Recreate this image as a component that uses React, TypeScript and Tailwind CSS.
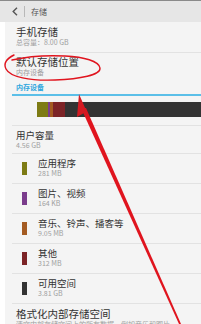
import React from 'react'

const items = [
  { name: '应用程序', size: '281 MB', color: 'bg-[#7d7b14]' },
  { name: '图片、视频', size: '164 KB', color: 'bg-[#7a3c8c]' },
  { name: '音乐、铃声、播客等', size: '9.05 MB', color: 'bg-[#a45b22]' },
  { name: '其他', size: '312 MB', color: 'bg-[#7c2427]' },
  { name: '可用空间', size: '3.81 GB', color: 'bg-[#333333]' },
]

function Divider() {
  return <div className="ml-[7px] h-px bg-[#e2e2e2]" />
}

export default function App() {
  return (
    <div
      className="relative h-[324px] w-[201px] overflow-hidden bg-[#f4f4f4] text-[#333]"
      style={{ fontFamily: '"Noto Sans CJK SC", "Noto Sans", sans-serif' }}
    >
      <div className="flex h-[22px] items-center border-t border-[#8a8a8a] bg-[#e6e6e6]">
        <svg width="6" height="9" viewBox="0 0 6 9" className="ml-[12px]">
          <path d="M5 0.8 L1.2 4.5 L5 8.2" fill="none" stroke="#555" strokeWidth="1.4" />
        </svg>
        <div className="ml-[6px] h-[11px] w-px bg-[#b8b8b8]" />
        <span className="ml-[6px] text-[8px] leading-none text-[#555]">存储</span>
      </div>

      <div className="border-l-[5px] border-white">
        <div className="h-[30px] pl-[11px] pt-[3px]">
          <div className="text-[10.5px] leading-[13px]">手机存储</div>
          <div className="text-[7px] leading-[9px] text-[#a0a0a0]">总容量：8.00 GB</div>
        </div>
        <Divider />
        <div className="h-[29px] pl-[11px] pt-[2px]">
          <div className="text-[10.5px] leading-[13px]">默认存储位置</div>
          <div className="text-[7px] leading-[9px] text-[#a0a0a0]">内存设备</div>
        </div>
        <div className="pl-[11px] text-[7px] font-bold leading-[10px] text-[#2ea6de]">内存设备</div>
        <div className="ml-[7px] mt-[2px] h-[1.5px] bg-[#5bbfe8]" />
        <div className="ml-[32px] mt-[6px] flex h-[15px]">
          <div className="w-[11px] bg-[#7d7b14]" />
          <div className="w-[2px] bg-[#7a3c8c]" />
          <div className="w-[3px] bg-[#a45b22]" />
          <div className="w-[12px] bg-[#7c2427]" />
          <div className="flex-1 bg-[#333]" />
        </div>
        <div className="mt-[8px]">
          <Divider />
        </div>
        <div className="h-[27px] pl-[11px] pt-[3px]">
          <div className="text-[9.5px] leading-[12px]">用户容量</div>
          <div className="text-[7px] leading-[9px] text-[#a0a0a0]">4.56 GB</div>
        </div>
        {items.map((it) => (
          <div key={it.name}>
            <Divider />
            <div className="flex h-[29px] pl-[17px]">
              <div className={`mt-[8px] h-[13px] w-[5px] ${it.color}`} />
              <div className="ml-[11px] pt-[3px]">
                <div className="text-[9.5px] leading-[12px]">{it.name}</div>
                <div className="text-[7px] leading-[9px] text-[#a0a0a0]">{it.size}</div>
              </div>
            </div>
          </div>
        ))}
        <Divider />
        <div className="pl-[11px] pt-[3px]">
          <div className="text-[10.5px] leading-[13px]">格式化内部存储空间</div>
          <div className="whitespace-nowrap text-[7px] leading-[9px] text-[#a0a0a0]">
            清空内部存储空间上的所有数据，例如音乐和图片
          </div>
        </div>
      </div>

      {/* red hand-drawn annotation */}
      <svg className="pointer-events-none absolute left-0 top-0" width="201" height="324" viewBox="0 0 201 324">
        <path
          d="M14 55 C8 58 3 63 6 69 C10 77 30 81 55 80 C80 79 101 75 100 68 C99 61 84 57 65 56 C45 55 25 57 12 60"
          fill="none"
          stroke="#e0141e"
          strokeWidth="1.4"
          strokeLinecap="round"
        />
        <path d="M81 108 L86 108 L181 324 L179 324 Z" fill="#e0141e" />
        <path d="M79 94 L89 117 L84 113 L77 117 Z" fill="#d41a22" />
      </svg>
    </div>
  )
}
